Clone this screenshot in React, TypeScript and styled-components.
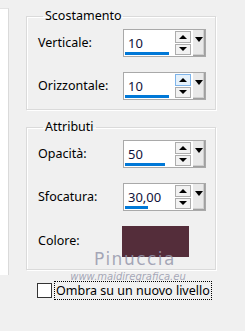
import styled, { createGlobalStyle } from 'styled-components'

const GlobalStyle = createGlobalStyle`
  html, body {
    margin: 0;
    padding: 0;
    background: #f0f0f0;
  }
`

const Window = styled.div`
  position: relative;
  width: 245px;
  height: 331px;
  background: #f0f0f0;
  display: flex;
  align-items: flex-start;
  font-family: 'Noto Sans', 'Open Sans', sans-serif;
  font-size: 12px;
  color: #000;
  overflow: hidden;
`

const SidePane = styled.div`
  width: 8px;
  height: 266px;
  margin-top: 8px;
  background: #fff;
  border-top: 1px solid #e3e3e3;
  border-right: 1px solid #dadada;
  flex-shrink: 0;
`

const Content = styled.div`
  margin-left: 17px;
  padding-top: 9px;
  display: flex;
  flex-direction: column;
  width: 190px;
`

const Group = styled.fieldset<{ $top?: number }>`
  margin: ${(p) => p.$top ?? 0}px 0 0 0;
  padding: 6px 9px 9px 11px;
  border: 1px solid #dadada;
  box-shadow: inset 1px 1px 0 #fff, 1px 1px 0 #fff;
  display: flex;
  flex-direction: column;
  gap: 15px;
  min-width: 0;
`

const Legend = styled.legend`
  padding: 0 2px;
  margin-left: 5px;
  font-size: 12.5px;
  line-height: 14px;
`

const Row = styled.div`
  display: flex;
  align-items: center;
  justify-content: space-between;
  height: 28px;
`

const Label = styled.span`
  font-size: 12.5px;
  padding-bottom: 2px;
`

const Spin = styled.div`
  display: flex;
  width: 83px;
  height: 28px;
  box-sizing: border-box;
  border: 1px solid #a9a9a9;
  background: #fff;
`

const Field = styled.div`
  position: relative;
  flex: 1;
  padding: 6px 0 0 4px;
  font-size: 13px;
  line-height: 14px;
  color: #10123a;
`

const Bar = styled.div`
  position: absolute;
  left: 1px;
  bottom: 1px;
  height: 3px;
  background: #0078d7;
`

const Steppers = styled.div`
  display: flex;
  flex-direction: column;
  gap: 1px;
  padding: 1px;
  width: 16px;
`

const StepButton = styled.div<{ $hover?: boolean }>`
  flex: 1;
  display: flex;
  align-items: center;
  justify-content: center;
  border: 1px solid ${(p) => (p.$hover ? '#7eb4ea' : '#adadad')};
  background: ${(p) => (p.$hover ? '#e5f1fb' : '#f2f2f2')};
`

const Arrow = styled.div<{ $down?: boolean }>`
  width: 0;
  height: 0;
  border-left: 4px solid transparent;
  border-right: 4px solid transparent;
  ${(p) =>
    p.$down
      ? 'border-top: 4px solid #000;'
      : 'border-bottom: 4px solid #000;'}
`

const Drop = styled.div`
  width: 13px;
  background: #e9e9e9;
  border-left: 1px solid #fff;
  box-shadow: inset -1px -1px 0 #a0a0a0, inset -2px -2px 0 #d0d0d0;
  display: flex;
  justify-content: center;
  padding-top: 7px;
  box-sizing: border-box;
`

const DropArrow = styled.div`
  width: 0;
  height: 0;
  margin-right: 1px;
  border-left: 4px solid transparent;
  border-right: 4px solid transparent;
  border-top: 5px solid #000;
`

const Swatch = styled.div<{ $color: string }>`
  width: 67px;
  height: 31px;
  margin-right: 17px;
  background: ${(p) => p.$color};
`

const ColorRow = styled(Row)`
  height: 31px;
  margin-bottom: 3px;
`

const CheckRow = styled.label`
  display: flex;
  align-items: center;
  gap: 3px;
  margin: 12px 0 0 11px;
  white-space: nowrap;
`

const Box = styled.span`
  width: 13px;
  height: 13px;
  border: 1px solid #333;
  background: #fff;
  flex-shrink: 0;
`

const Focus = styled.span`
  outline: 1px dotted #000;
  padding: 0 1px;
  font-size: 12.5px;
  line-height: 17px;
`

const Watermark = styled.div`
  position: absolute;
  left: 66px;
  top: 250px;
  width: 124px;
  text-align: center;
  color: rgba(150, 152, 172, 0.85);
  pointer-events: none;
`

const WmTitle = styled.div`
  font-family: 'DejaVu Sans', sans-serif;
  font-size: 17px;
  line-height: 19px;
  letter-spacing: 1.5px;
  margin-left: 14px;
`

const WmUrl = styled.div`
  font-family: 'DejaVu Sans', sans-serif;
  font-size: 10px;
  line-height: 11px;
  font-style: italic;
  margin-top: 2px;
`

function SpinField({ value, bar, hover }: { value: string; bar: number; hover?: boolean }) {
  return (
    <Spin>
      <Field>
        {value}
        <Bar style={{ width: bar }} />
      </Field>
      <Steppers>
        <StepButton $hover={hover}>
          <Arrow />
        </StepButton>
        <StepButton>
          <Arrow $down />
        </StepButton>
      </Steppers>
      <Drop>
        <DropArrow />
      </Drop>
    </Spin>
  )
}

export default function App() {
  return (
    <>
      <GlobalStyle />
      <Window>
        <SidePane />
        <Content>
          <Group>
            <Legend>Scostamento</Legend>
            <Row>
              <Label>Verticale:</Label>
              <SpinField value="10" bar={44} />
            </Row>
            <Row>
              <Label>Orizzontale:</Label>
              <SpinField value="10" bar={44} hover />
            </Row>
          </Group>
          <Group $top={10}>
            <Legend>Attributi</Legend>
            <Row>
              <Label>Opacità:</Label>
              <SpinField value="50" bar={40} />
            </Row>
            <Row>
              <Label>Sfocatura:</Label>
              <SpinField value="30,00" bar={23} />
            </Row>
            <ColorRow>
              <Label>Colore:</Label>
              <Swatch $color="#542d3a" />
            </ColorRow>
          </Group>
          <CheckRow>
            <Box />
            <Focus>Ombra su un nuovo livello</Focus>
          </CheckRow>
        </Content>
        <Watermark>
          <WmTitle>Pinuccia</WmTitle>
          <WmUrl>www.maidiregrafica.eu</WmUrl>
        </Watermark>
      </Window>
    </>
  )
}
